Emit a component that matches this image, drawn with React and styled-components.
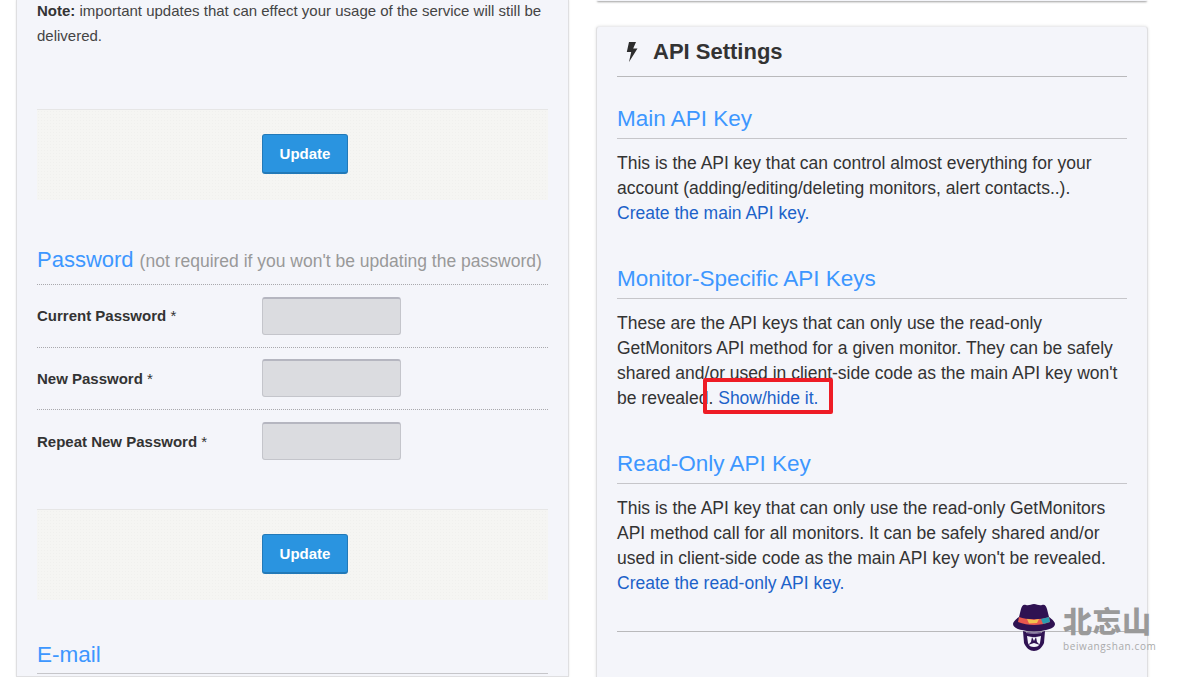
import React from "react"
import styled, { createGlobalStyle } from "styled-components"

const GlobalStyle = createGlobalStyle`
  html, body {
    margin: 0;
    padding: 0;
    background: #fff;
    overflow: hidden;
  }
  body {
    font-family: "Liberation Sans", Arial, sans-serif;
    color: #333;
  }
`

const Page = styled.div`
  position: relative;
  height: 677px;
  overflow: hidden;
  display: grid;
  grid-template-columns: 553px 552px;
  column-gap: 27px;
  padding-left: 16px;
  align-items: start;
`

const Card = styled.section`
  box-sizing: border-box;
  background: #f4f5fa;
  border: 1px solid #dfdfe1;
  border-top: 0;
  box-shadow: 0 0 2px rgba(0, 0, 0, 0.1);
  padding: 0 20px;
  height: 677px;
`

const Column = styled.div`
  display: flex;
  flex-direction: column;
`

const TopCardEdge = styled.div`
  height: 1px;
  margin: 0 1px 25px;
  background: #f4f5fa;
  border-radius: 0 0 3px 3px;
  box-shadow: 0 1px 2px rgba(0, 0, 0, 0.55);
`

const ApiCard = styled(Card)`
  border-top: 1px solid #ececee;
  border-radius: 4px 4px 0 0;
  box-shadow: 0 0 3px rgba(0, 0, 0, 0.12);
  height: 660px;
`

const CardTitle = styled.h2`
  display: flex;
  align-items: center;
  gap: 15px;
  height: 49px;
  margin: 0;
  padding-left: 9px;
  border-bottom: 1px solid #b9b9bb;
  font-size: 22px;
  font-weight: bold;
  color: #333;
`

const Note = styled.p`
  margin: -2px 0 0;
  font-size: 15px;
  line-height: 25px;
  color: #444;
  b {
    color: #333;
  }
`

const FormFooter = styled.div`
  display: flex;
  box-sizing: border-box;
  height: 91px;
  margin-top: ${p => p.$top}px;
  padding: 24px 0 0 225px;
  border-top: 1px solid #e6e6e6;
  background-color: #f5f5f3;
  background-image: radial-gradient(#f0f0ee 1px, transparent 1px);
  background-size: 3px 3px;
`

const UpdateButton = styled.button`
  box-sizing: border-box;
  width: 86px;
  height: 40px;
  background: #2a94e0;
  border: 1px solid #2279b8;
  border-bottom-width: 2px;
  border-radius: 3px;
  color: #fff;
  font-family: inherit;
  font-size: 15px;
  font-weight: bold;
`

const SectionHeading = styled.h3`
  margin: ${p => p.$top ?? 39}px 0 0;
  padding-bottom: ${p => p.$pad ?? 5}px;
  border-bottom: 1px ${p => (p.$dotted ? "dotted #a9a9ad" : "solid #c6c6ca")};
  font-size: ${p => p.$size ?? 22.5}px;
  line-height: 28px;
  font-weight: normal;
  white-space: nowrap;
  color: #3d97ff;
`

const HeadingHint = styled.small`
  margin-left: 6px;
  font-size: 17.5px;
  color: #999;
`

const PasswordRow = styled.div`
  box-sizing: border-box;
  display: flex;
  align-items: center;
  height: 62.5px;
  border-bottom: ${p => (p.$last ? "0" : "1px dotted #a9a9ad")};
`

const RowLabel = styled.label`
  width: 225px;
  font-size: 15px;
  font-weight: bold;
  color: #333;
  span {
    font-weight: normal;
  }
`

const PasswordInput = styled.input`
  box-sizing: border-box;
  width: 139px;
  height: 38px;
  background: #dbdce0;
  border: 1px solid #c4c5cb;
  border-top: 2px solid #b5b6c0;
  border-radius: 3px;
`

const BodyText = styled.p`
  margin: 12px 0 0;
  font-size: 17.5px;
  line-height: 25px;
  color: #333;
`

const TextLink = styled.a`
  color: #1c62c9;
  text-decoration: none;
`

const Annotated = styled.span`
  position: relative;
`

const RedFrame = styled.span`
  position: absolute;
  left: -15px;
  right: -15px;
  top: -10px;
  bottom: -6px;
  border: 4px solid #ee1c25;
  border-radius: 2px;
`

const Rule = styled.hr`
  margin: 35px 0 0;
  border: 0;
  border-top: 1px solid #b9b9bb;
`

const Watermark = styled.div`
  position: absolute;
  left: 1012px;
  top: 603px;
  display: flex;
  gap: 7px;
`

const WatermarkText = styled.div`
  display: flex;
  flex-direction: column;
`

const WatermarkName = styled.span`
  margin-top: -2px;
  font-family: "Noto Sans CJK SC", sans-serif;
  font-size: 29px;
  line-height: 38px;
  font-weight: 900;
  letter-spacing: 0.5px;
  color: #9a9a9a;
`

const WatermarkUrl = styled.span`
  margin-top: 1px;
  font-family: "Open Sans", sans-serif;
  font-size: 10px;
  line-height: 12px;
  letter-spacing: 0.6px;
  color: #aaa;
`

const BoltIcon = () => (
  <svg width="12" height="20" viewBox="0 0 12 20">
    <path d="M3 0h7L7.200 6.500H11.500L3 20l2.200-10H.8z" fill="#2d2d2d" />
  </svg>
)

const HatLogo = () => (
  <svg width="44" height="49" viewBox="0 0 44 49">
    <path d="M22 1c-3 0-5 2-8 1-3-1-4 1-5 4l-2 8C4 16 1 19 1 21c0 3 4 5 9 6 8 2 16 2 24 0 5-1 9-3 9-6 0-2-3-5-6-7l-2-8c-1-3-2-5-5-4-3 1-5-1-8-1z" fill="#2f1252" />
    <path d="M7 14c8 3 22 3 30 0l1 5c-10 4-22 4-32 0z" fill="#e8574f" />
    <path d="M15 16l7 1 5-1-2 4-8 .6z" fill="#f2c14e" />
    <path d="M29 16l8-2 1 5-7 2z" fill="#2a9db0" />
    <path d="M11 28c7 2 15 2 22 0l-1 12c-2 5-6 8-10 8s-8-3-10-8z" fill="#2f1252" />
    <path d="M14 29.500c5 1.200 11 1.200 16 0" stroke="#8d7fa3" strokeWidth="1" fill="none" />
    <path d="M15 33c5 1.500 9 1.500 14 0l-1 7c-1 3-3 4-6 4s-5-1-6-4z" fill="#f4f5fa" />
    <path d="M20 34l2 4 2-4 1 5 3 3-6-2-6 2 3-3z" fill="#2f1252" />
  </svg>
)

export default function App() {
  return (
    <>
      <GlobalStyle />
      <Page>
        <Card>
          <Note>
            <b>Note:</b> important updates that can effect your usage of the service will still be delivered.
          </Note>
          <FormFooter $top={61}>
            <UpdateButton>Update</UpdateButton>
          </FormFooter>

          <SectionHeading $top={46} $pad={9} $size={22} $dotted>
            Password<HeadingHint>(not required if you won't be updating the password)</HeadingHint>
          </SectionHeading>
          <PasswordRow>
            <RowLabel>Current Password <span>*</span></RowLabel>
            <PasswordInput type="password" />
          </PasswordRow>
          <PasswordRow>
            <RowLabel>New Password <span>*</span></RowLabel>
            <PasswordInput type="password" />
          </PasswordRow>
          <PasswordRow $last>
            <RowLabel>Repeat New Password <span>*</span></RowLabel>
            <PasswordInput type="password" />
          </PasswordRow>
          <FormFooter $top={36}>
            <UpdateButton>Update</UpdateButton>
          </FormFooter>

          <SectionHeading $top={41} $pad={4}>E-mail</SectionHeading>
        </Card>

        <Column>
          <TopCardEdge />
          <ApiCard>
            <CardTitle><BoltIcon />API Settings</CardTitle>

            <SectionHeading $top={28}>Main API Key</SectionHeading>
            <BodyText>
              This is the API key that can control almost everything for your account
              (adding/editing/deleting monitors, alert contacts..).<br />
              <TextLink>Create the main API key.</TextLink>
            </BodyText>

            <SectionHeading>Monitor-Specific API Keys</SectionHeading>
            <BodyText>
              These are the API keys that can only use the read-only GetMonitors API method for a given
              monitor. They can be safely shared and/or used in client-side code as the main API key
              won't be revealed.{" "}
              <Annotated>
                <TextLink>Show/hide it.</TextLink>
                <RedFrame />
              </Annotated>
            </BodyText>

            <SectionHeading>Read-Only API Key</SectionHeading>
            <BodyText>
              This is the API key that can only use the read-only GetMonitors API method call for all
              monitors. It can be safely shared and/or used in client-side code as the main API key
              won't be revealed.<br />
              <TextLink>Create the read-only API key.</TextLink>
            </BodyText>

            <Rule />
          </ApiCard>
        </Column>

        <Watermark>
          <HatLogo />
          <WatermarkText>
            <WatermarkName>北忘山</WatermarkName>
            <WatermarkUrl>beiwangshan.com</WatermarkUrl>
          </WatermarkText>
        </Watermark>
      </Page>
    </>
  )
}
